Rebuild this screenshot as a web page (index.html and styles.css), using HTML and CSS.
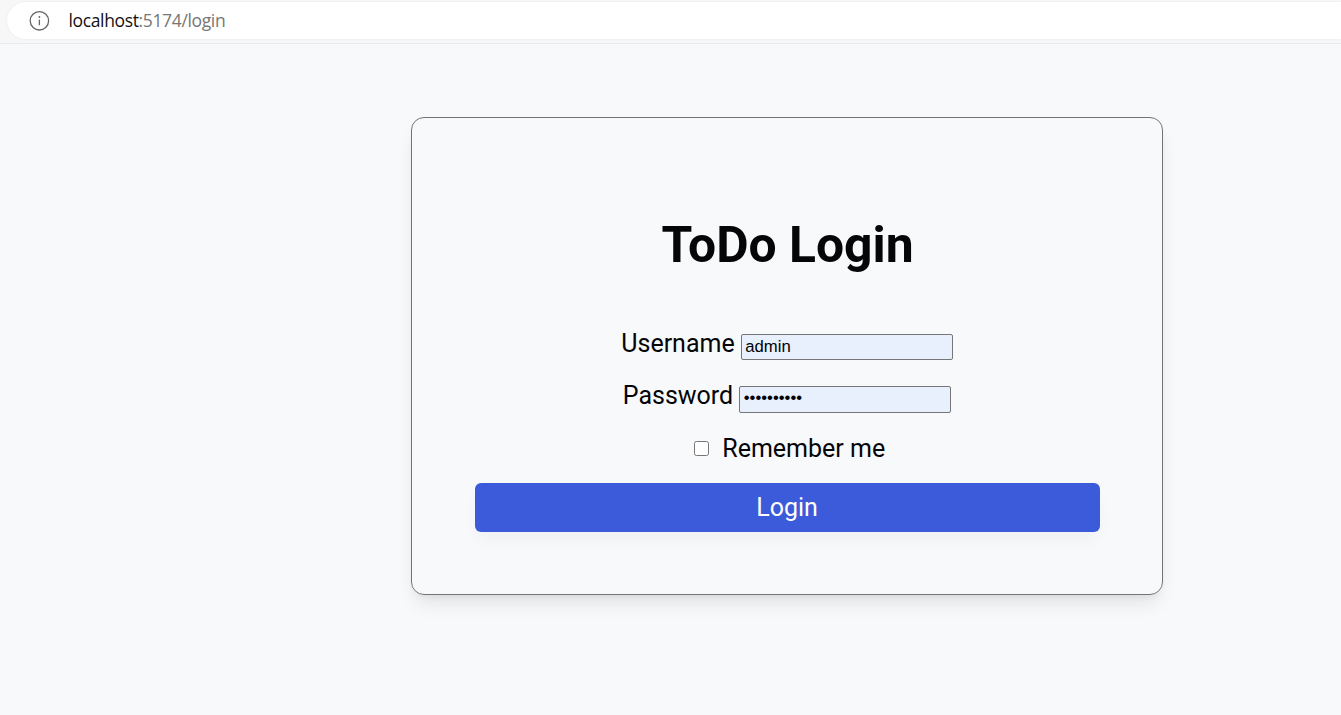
FILE: index.html
```html
<!DOCTYPE html>
<html lang="en">
<head>
<meta charset="utf-8">
<title>ToDo Login</title>
<link rel="stylesheet" href="styles.css">
</head>
<body>
<header class="browser-bar">
  <div class="address">
    <svg class="info-icon" viewBox="0 0 20 20" width="20" height="20" fill="none" stroke="#666" stroke-width="1.3"><circle cx="10.4" cy="9.8" r="9.2"/><path d="M10.4 8.6v5.6"/><circle cx="10.4" cy="6" r=".9" fill="#666" stroke="none"/></svg>
    <span class="url"><span class="host">localhost</span>:5174/login</span>
  </div>
</header>
<main class="page">
  <form class="card">
    <h1 class="title">ToDo Login</h1>
    <div class="field"><label class="label" for="user">Username</label><input class="input" id="user" type="text" value="admin"></div>
    <div class="field"><label class="label" for="pass">Password</label><input class="input input-password" id="pass" type="password" value="adminadmin"></div>
    <div class="remember"><input class="check" id="remember" type="checkbox"><label class="label" for="remember">Remember me</label></div>
    <button class="submit" type="button">Login</button>
  </form>
</main>
</body>
</html>
```
FILE: styles.css
```css
* { box-sizing: border-box; }
body { margin: 0; height: 715px; overflow: hidden; background: #f8f9fb; color: #050608; font-family: Roboto, sans-serif; }
.browser-bar { height: 44px; padding: 2px 0 4px 7px; background: #f7f7f7; border-bottom: 1px solid #e9ebed; }
.address { display: flex; align-items: center; height: 37px; padding-left: 22px; background: #fff; border-radius: 19px 0 0 19px; box-shadow: 0 0 2px #e4e4e4; }
.info-icon { overflow: visible; }
.url { margin: -2px 0 0 19.5px; font: 17.5px "Open Sans", sans-serif; letter-spacing: -.36px; color: #767676; }
.host { color: #111; }
.page { padding: 73px 0 0 411px; }
.card { display: flex; flex-direction: column; align-items: center; width: 752px; height: 478px; padding: 97px 63px 0; border: 1px solid #737478; border-radius: 13px; box-shadow: 0 12px 19px -4px rgba(0,0,0,.09), 0 5px 8px -5px rgba(0,0,0,.08); }
.title { margin: 0 0 53px; padding-left: 1px; font-size: 49.8px; line-height: 60px; font-weight: 700; }
.field { display: flex; height: 52px; gap: 6px; }
.label { font-size: 25px; line-height: 32px; }
.input { width: 212px; height: 26px; margin-top: 6px; padding: 1px 3.5px; border: 1px solid #767676; border-radius: 2px; background: #e8f0fe; color: #000; font: 16.7px "Liberation Sans", sans-serif; }
.input-password { height: 27px; padding-bottom: 4px; }
.remember { display: flex; align-items: center; height: 32px; margin-top: 1px; gap: 13.5px; padding-left: 5px; }
.check { width: 15px; height: 15px; margin: 0 0 1px; }
.submit { width: 625px; height: 49px; margin-top: 18px; border: 0; border-radius: 6px; background: #3b5bdb; color: #fff; font: 25px Roboto, sans-serif; box-shadow: 0 10px 18px -3px rgba(0,0,0,.045); }
```
